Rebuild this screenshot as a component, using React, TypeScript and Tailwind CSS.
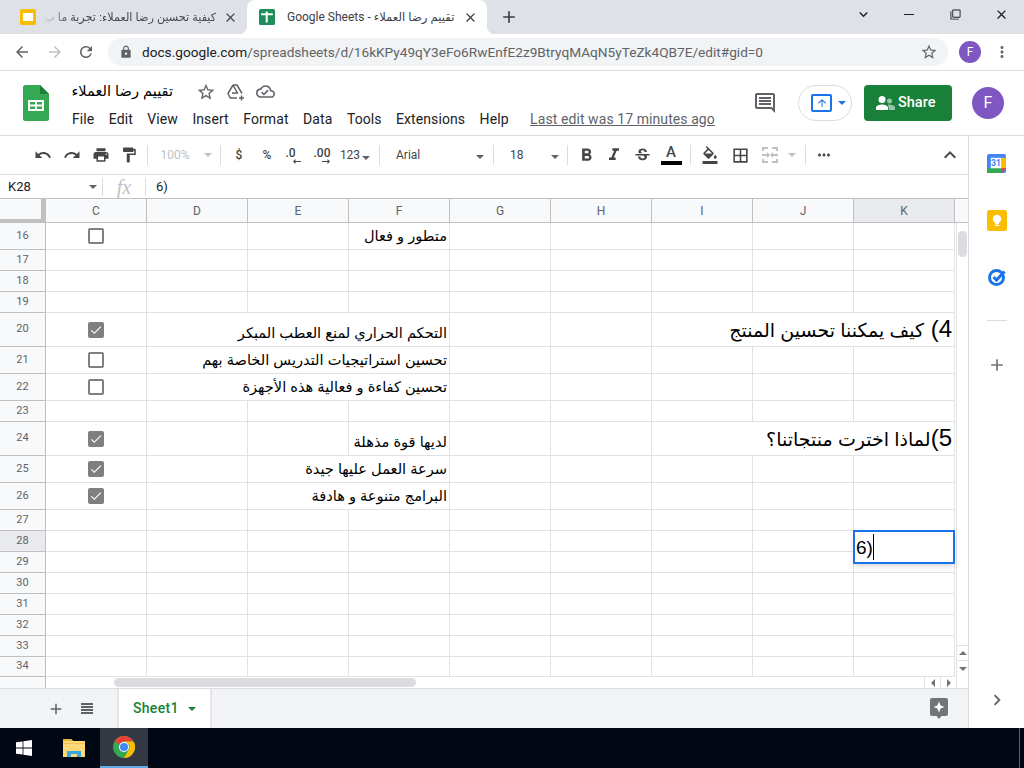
import React from "react";
import {
  MdArrowBack, MdArrowForward, MdRefresh, MdLock, MdStarBorder, MdOutlineCloudDone,
  MdOutlineInsertComment, MdUndo, MdRedo, MdPrint, MdFormatPaint, MdFormatBold, MdFormatItalic, MdStrikethroughS,
  MdFormatColorFill, MdBorderAll, MdMoreHoriz, MdExpandLess, MdAdd, MdClose, MdArrowUpward, MdChevronRight,
  MdKeyboardArrowDown, MdFilterNone, MdMoreVert, MdCheck,
} from "react-icons/md";

const Caret = ({ cls = "border-t-[#5f6368]" }: { cls?: string }) => (
  <span className={"inline-block w-0 h-0 border-x-[4px] border-x-transparent border-t-[4px] " + cls} />
);

const Tool = ({ children, w = "w-[28px]" }: { children: React.ReactNode; w?: string }) => (
  <div className={"flex items-center justify-center shrink-0 h-[24px] text-[#444746] " + w}>{children}</div>
);
const Sep = ({ m = "mx-[4px]" }: { m?: string }) => <div className={"w-px h-[20px] bg-[#dadce0] shrink-0 " + m} />;

type Row = { n: number; h: string; box?: "on" | "off"; text?: string; num?: string; q?: string; open?: string[]; head?: boolean };
const rows: Row[] = [
  { n: 16, h: "h-[27px]", box: "off", text: "متطور و فعال", open: [] },
  { n: 17, h: "h-[21px]" },
  { n: 18, h: "h-[21px]" },
  { n: 19, h: "h-[21px]" },
  { n: 20, h: "h-[34px]", box: "on", text: "التحكم الحراري لمنع العطب المبكر", open: ["D", "E", "I", "J"], num: "4) ", q: "كيف يمكننا تحسين المنتج" },
  { n: 21, h: "h-[27px]", box: "off", text: "تحسين استراتيجيات التدريس الخاصة بهم", open: ["D", "E"] },
  { n: 22, h: "h-[27px]", box: "off", text: "تحسين كفاءة و فعالية هذه الأجهزة", open: ["D", "E"] },
  { n: 23, h: "h-[21px]" },
  { n: 24, h: "h-[34px]", box: "on", text: "لديها قوة مذهلة", open: ["I", "J"], num: "5)", q: "لماذا اخترت منتجاتنا؟" },
  { n: 25, h: "h-[27px]", box: "on", text: "سرعة العمل عليها جيدة", open: ["E"] },
  { n: 26, h: "h-[27px]", box: "on", text: "البرامج متنوعة و هادفة", open: ["E"] },
  { n: 27, h: "h-[21px]" },
  { n: 28, h: "h-[21px]", head: true },
  { n: 29, h: "h-[21px]" },
  { n: 30, h: "h-[21px]" },
  { n: 31, h: "h-[21px]" },
  { n: 32, h: "h-[21px]" },
  { n: 33, h: "h-[21px]" },
  { n: 34, h: "h-[20px]" },
];
const cols = ["C", "D", "E", "F", "G", "H", "I", "J", "K"];
const arabic = { fontFamily: '"Liberation Sans", "DejaVu Sans", sans-serif' };

function Checkbox({ on }: { on: boolean }) {
  return on ? (
    <div className="w-[16px] h-[16px] rounded-[2px] bg-[#7f7f7f] flex items-center justify-center">
      <MdCheck size={14} className="text-white" />
    </div>
  ) : (
    <div className="w-[16px] h-[16px] rounded-[2px] border-2 border-[#7f7f7f] bg-white" />
  );
}

function SheetRow({ r }: { r: Row }) {
  return (
    <div className={"flex shrink-0 " + r.h}>
      <div className={"w-[46px] shrink-0 border-r border-b border-r-[#c0c0c0] border-b-[#c0c0c0] flex items-center justify-center text-[11px] text-[#5f6368] " + (r.head ? "bg-[#e8eaed]" : "bg-[#f8f9fa]")}>
        {r.n}
      </div>
      {cols.map((c) => {
        const open = r.open?.includes(c);
        return (
          <div key={c} className={"relative w-[101px] shrink-0 border-b border-b-[#e2e2e2] " + (open ? "" : "border-r border-r-[#e2e2e2]")}>
            {c === "C" && r.box && (
              <div className="h-full flex items-center justify-center">
                <Checkbox on={r.box === "on"} />
              </div>
            )}
            {c === "F" && r.text && (
              <div className="h-full flex items-end justify-end pr-[2px] pb-[2px]">
                <span dir="rtl" style={arabic} className="shrink-0 whitespace-nowrap text-[14.6px] leading-[22px] text-black">{r.text}</span>
              </div>
            )}
            {c === "K" && r.q && (
              <div className="h-full flex items-center justify-end pr-[2px]">
                <span dir="rtl" style={arabic} className="shrink-0 whitespace-nowrap text-[24px] leading-[33px] text-black">
                  {r.num}<span className="text-[19px]">{r.q}</span>
                </span>
              </div>
            )}
            {c === "K" && r.head && (
              <div className="absolute z-10 left-[-1px] top-[-1px] w-[102px] h-[34px] bg-white border-2 border-[#1a73e8] shadow-md flex items-center pl-[1px]">
                <span className="font-['Liberation_Sans'] text-[19px] leading-none text-black">6)</span>
                <span className="w-px h-[26px] bg-black" />
              </div>
            )}
          </div>
        );
      })}
    </div>
  );
}

const Calendar = () => (
  <svg width="19" height="19" viewBox="0 0 20 20">
    <rect x="0" y="0" width="20" height="20" rx="2" fill="#4285f4" />
    <rect x="0" y="15" width="15" height="5" fill="#34a853" />
    <rect x="15" y="4" width="5" height="11" fill="#fbbc04" />
    <path d="M15 15h5l-5 5z" fill="#ea4335" />
    <rect x="4" y="4" width="11" height="11" fill="#fff" />
    <text x="9.5" y="13" fontSize="9" fontWeight="700" fill="#4285f4" textAnchor="middle" fontFamily="Roboto">31</text>
  </svg>
);
const Keep = () => (
  <svg width="20" height="21" viewBox="0 0 20 21">
    <rect width="20" height="21" rx="2.5" fill="#fbbc04" />
    <circle cx="10" cy="9" r="4.2" fill="#fff" />
    <rect x="8" y="12" width="4" height="2" fill="#fff" />
    <rect x="8" y="14.6" width="4" height="1.4" fill="#fff" />
  </svg>
);
const Tasks = () => (
  <svg width="20" height="20" viewBox="0 0 20 20" fill="none">
    <circle cx="9.5" cy="10.5" r="7" stroke="#1a73e8" strokeWidth="3" />
    <path d="M6.5 10l3 3 8-8.5" stroke="#1a73e8" strokeWidth="3" />
  </svg>
);
const SheetsLogo = () => (
  <svg width="26" height="36" viewBox="0 0 26 36">
    <path d="M2.5 0H17l9 9v24.5a2.5 2.5 0 0 1-2.5 2.5h-21A2.5 2.5 0 0 1 0 33.5v-31A2.5 2.5 0 0 1 2.5 0z" fill="#34a853" />
    <path d="M17 0l9 9h-9z" fill="#188038" />
    <path d="M5 15h16v11H5zm2 2v2.5h5V17zm7 0v2.5h5V17zm-7 4.5V24h5v-2.5zm7 0V24h5v-2.5z" fill="#fff" fillRule="evenodd" />
  </svg>
);
const Favicon = () => (
  <svg width="16" height="16" viewBox="0 0 16 16">
    <rect width="16" height="16" rx="1.5" fill="#1e8e5a" />
    <path d="M6.7 2.5h2v11h-2zM2.2 4.2h11.6v2H2.2z" fill="#fff" />
  </svg>
);
const DriveAdd = () => (
  <svg width="20" height="20" viewBox="0 0 20 20" fill="none" stroke="#5f6368" strokeWidth="1.5" strokeLinejoin="round">
    <path d="M7 3h4l5 8.5M7 3L2 11.5 4.2 16H11" />
    <path d="M7 3l4.5 8H6" />
    <path d="M15.5 13.5v5M13 16h5" />
  </svg>
);
const ShareIcon = () => (
  <svg width="19" height="14" viewBox="0 0 19 14">
    <circle cx="13.5" cy="5" r="2.5" fill="#fff" fillOpacity=".55" />
    <path d="M12 8.5c3 0 7 .9 7 2.8V14h-6z" fill="#fff" fillOpacity=".55" />
    <circle cx="6" cy="3.5" r="3.5" fill="#fff" />
    <path d="M0 14v-2.2C0 9.3 4 8.5 6 8.5s6 .8 6 3.3V14z" fill="#fff" />
  </svg>
);
const ArrowL = () => (
  <svg width="8" height="5" viewBox="0 0 8 5" fill="#444746"><path d="M0 2.5L2.5 0v2H8v1H2.5v2z" /></svg>
);
const ArrowR = () => (
  <svg width="8" height="5" viewBox="0 0 8 5" fill="#444746"><path d="M8 2.5L5.5 0v2H0v1h5.5v2z" /></svg>
);
const Chrome = () => (
  <svg width="22" height="22" viewBox="0 0 22 22">
    <circle cx="11" cy="11" r="11" fill="#34a853" />
    <path d="M11 0a11 11 0 0 1 9.53 5.5H11A5.5 5.5 0 0 0 6.24 8.25L1.47 5.5A11 11 0 0 1 11 0z" fill="#ea4335" />
    <path d="M20.53 5.5A11 11 0 0 1 11 22l4.76-8.25A5.5 5.5 0 0 0 15.76 8.25L11 5.5z" fill="#fbbc04" />
    <circle cx="11" cy="11" r="5" fill="#fff" />
    <circle cx="11" cy="11" r="4" fill="#4285f4" />
  </svg>
);
const Folder = () => (
  <svg width="22" height="20" viewBox="0 0 22 20">
    <path d="M0 1h8l2 2h12v16H0z" fill="#ffd978" />
    <path d="M0 1h8l2 2H0z" fill="#e6b73f" />
    <rect x="0" y="5" width="22" height="1" fill="#f4c24f" />
    <path d="M4 19v-6h14v6h-4v-3h-6v3z" fill="#3aa7e0" />
  </svg>
);
const Windows = () => (
  <svg width="16" height="16" viewBox="0 0 16 16" fill="#fff">
    <path d="M0 2.3l6.6-.9v6.2H0zM7.4 1.3L16 0v7.6H7.4zM0 8.4h6.6v6.2L0 13.7zM7.4 8.4H16V16l-8.6-1.2z" />
  </svg>
);
const Explore = () => (
  <svg width="18" height="21" viewBox="0 0 18 21">
    <path d="M2 0h14a2 2 0 0 1 2 2v14a2 2 0 0 1-2 2h-4.5L9 21l-2.5-3H2a2 2 0 0 1-2-2V2a2 2 0 0 1 2-2z" fill="#70757a" />
    <path d="M9 3.5l1.6 3.9L14.5 9l-3.9 1.6L9 14.5l-1.6-3.9L3.5 9l3.9-1.6z" fill="#fff" />
  </svg>
);
const Merge = () => (
  <svg width="18" height="18" viewBox="0 0 18 18" fill="#bdc1c6">
    <path d="M1 1h6v2H3v2H1zM11 1h6v4h-2V3h-4zM1 13h2v2h4v2H1zM15 13h2v4h-6v-2h4zM1 8h5V6l3 3-3 3v-2H1zM17 8h-5V6L9 9l3 3v-2h5z" />
  </svg>
);

export default function App() {
  return (
    <div className="w-[1024px] h-[768px] overflow-hidden flex flex-col bg-white font-['Roboto',sans-serif] text-[#202124]">
      {/* Tab strip */}
      <div className="h-[34px] shrink-0 bg-[#dee1e6] flex items-stretch">
        <div className="w-[247px] shrink-0 flex items-center pl-[20px] pr-[9px]">
          <div className="w-[16px] h-[16px] rounded-[2px] bg-[#fbbc04] flex items-center justify-center shrink-0">
            <div className="w-[10px] h-[8px] bg-white" />
          </div>
          <div className="flex-1 min-w-0 flex justify-end ml-[6px] mr-[7px] [mask-image:linear-gradient(to_right,transparent,black_28px)]">
            <span dir="rtl" style={arabic} className="shrink-0 whitespace-nowrap text-[11.2px] text-[#45494f]">كيفية تحسين رضا العملاء: تجربة ما ب</span>
          </div>
          <MdClose size={15} className="text-[#45494f] shrink-0" />
        </div>
        <div className="relative w-[240px] shrink-0 bg-white rounded-t-[8px] flex items-center pl-[12px] pr-[9px]">
          <div className="absolute left-[-8px] bottom-0 w-[8px] h-[8px] bg-[radial-gradient(circle_at_0_0,#dee1e6_8px,#fff_8px)]" />
          <div className="absolute right-[-8px] bottom-0 w-[8px] h-[8px] bg-[radial-gradient(circle_at_100%_0,#dee1e6_8px,#fff_8px)]" />
          <Favicon />
          <span className="flex-1 ml-[12px] whitespace-nowrap text-[12px] text-[#3c4043] font-['Roboto']">
            Google Sheets - <span dir="rtl" style={arabic} className="text-[11.6px]">تقييم رضا العملاء</span>
          </span>
          <MdClose size={15} className="text-[#3c4043] shrink-0" />
        </div>
        <div className="ml-[12px] flex items-center">
          <MdAdd size={20} className="text-[#3c4043]" />
        </div>
        <div className="flex-1" />
        <div className="flex items-start text-[#202124]">
          <div className="w-[46px] h-[28px] flex items-center justify-center"><MdKeyboardArrowDown size={17} /></div>
          <div className="w-[46px] h-[28px] flex items-center justify-center"><div className="w-[10px] h-px bg-[#202124]" /></div>
          <div className="w-[46px] h-[28px] flex items-center justify-center"><MdFilterNone size={11} /></div>
          <div className="w-[46px] h-[28px] flex items-center justify-center"><MdClose size={15} /></div>
        </div>
      </div>
      {/* Address bar */}
      <div className="h-[37px] shrink-0 border-b border-[#dadce0] flex items-center">
        <div className="w-[108px] shrink-0 flex items-center text-[#5f6368]">
          <MdArrowBack size={18} className="ml-[13px]" />
          <MdArrowForward size={18} className="ml-[15px] text-[#bdc1c6]" />
          <MdRefresh size={18} className="ml-[13px]" />
        </div>
        <div className="w-[840px] h-[28px] shrink-0 rounded-full bg-[#f1f3f4] flex items-center pl-[11px] pr-[10px]">
          <MdLock size={14} className="text-[#5f6368]" />
          <span className="ml-[9px] text-[13.65px] text-[#5f6368] whitespace-nowrap flex-1">
            <span className="text-[#202124]">docs.google.com</span>/spreadsheets/d/16kKPy49qY3eFo6RwEnfE2z9BtryqMAqN5yTeZk4QB7E/edit#gid=0
          </span>
          <MdStarBorder size={18} className="text-[#5f6368]" />
        </div>
        <div className="ml-[11px] w-[22px] h-[22px] rounded-full bg-[#7e57c2] text-white text-[12px] flex items-center justify-center">F</div>
        <MdMoreVert size={18} className="ml-[12px] text-[#5f6368]" />
      </div>
      {/* Docs header */}
      <div className="h-[65px] shrink-0 border-b border-[#dadce0] flex">
        <div className="w-[72px] shrink-0 pl-[23px] pt-[14px]"><SheetsLogo /></div>
        <div className="flex-1 min-w-0 flex flex-col">
          <div className="h-[35px] flex items-center pt-[6px]">
            <span dir="rtl" style={arabic} className="w-[101px] whitespace-nowrap text-[14.6px] font-medium text-black">تقييم رضا العملاء</span>
            <MdStarBorder size={20} className="ml-[23px] text-[#5f6368]" />
            <span className="ml-[10px]"><DriveAdd /></span>
            <MdOutlineCloudDone size={19} className="ml-[10px] text-[#5f6368]" />
          </div>
          <div className="mt-[3px] flex items-center text-[14px] gap-[14.5px] tracking-[0.08px] leading-[20px] text-[#202124]">
            <span>File</span><span>Edit</span><span>View</span><span>Insert</span><span>Format</span><span>Data</span><span>Tools</span><span>Extensions</span><span>Help</span>
            <span className="ml-[7px] text-[#5f6368] underline">Last edit was 17 minutes ago</span>
          </div>
        </div>
        <div className="flex items-start pt-[14px] pr-[20px]">
          <MdOutlineInsertComment size={24} className="mt-[6px] text-[#5f6368]" />
          <div className="ml-[21px] w-[54px] h-[36px] rounded-full border border-[#dadce0] flex items-center pl-[12px] gap-[6px]">
            <div className="w-[21px] h-[18px] border-2 border-[#1a73e8] rounded-[2px] flex items-center justify-center"><MdArrowUpward size={12} className="text-[#1a73e8]" /></div>
            <Caret cls="border-t-[#1a73e8]" />
          </div>
          <div className="ml-[12px] w-[88px] h-[36px] rounded-[4px] bg-[#188038] text-white text-[14.5px] font-medium flex items-center pl-[12px] gap-[3px]">
            <ShareIcon /> Share
          </div>
          <div className="ml-[20px] mt-[2px] w-[32px] h-[32px] rounded-full bg-[#7e57c2] text-white text-[16px] flex items-center justify-center">F</div>
        </div>
      </div>
      {/* Body */}
      <div className="flex-1 min-h-0 flex">
        <div className="w-[968px] shrink-0 flex flex-col">
          {/* Toolbar */}
          <div className="h-[39px] shrink-0 border-b border-[#dadce0] flex items-center pl-[29px]">
            <Tool><MdUndo size={18} /></Tool>
            <Tool w="w-[30px]"><MdRedo size={18} /></Tool>
            <Tool><MdPrint size={18} /></Tool>
            <Tool><MdFormatPaint size={18} /></Tool>
            <Sep />
            <Tool w="w-[68px]"><span className="text-[12px] text-[#bdc1c6] mr-[14px]">100%</span><Caret cls="border-t-[#bdc1c6]" /></Tool>
            <Sep m="mx-0" />
            <Tool w="w-[36px]"><span className="text-[12px] font-medium">$</span></Tool>
            <Tool w="w-[20px]"><span className="text-[12px] font-medium">%</span></Tool>
            <Tool w="w-[32px]">
              <div className="flex flex-col items-start">
                <span className="text-[12px] font-medium leading-[12px]">.0</span>
                <span className="ml-[7px]"><ArrowL /></span>
              </div>
            </Tool>
            <Tool w="w-[26px]">
              <div className="flex flex-col items-end">
                <span className="text-[12px] font-medium leading-[12px]">.00</span>
                <ArrowR />
              </div>
            </Tool>
            <Tool w="w-[44px]"><span className="text-[12px] mr-[2px]">123</span><span className="mr-[4px]"><Caret /></span></Tool>
            <Sep m="mx-0" />
            <div className="w-[113px] shrink-0 flex items-center pl-[16px] text-[12px] text-[#444746]"><span className="flex-1">Arial</span><span className="mr-[9px]"><Caret /></span></div>
            <Sep m="mx-0" />
            <div className="w-[73px] shrink-0 flex items-center pl-[16px] text-[12px] text-[#444746]"><span className="flex-1">18</span><span className="mr-[8px]"><Caret /></span></div>
            <Sep m="mx-0" />
            <Tool w="w-[36px]"><MdFormatBold size={21} /></Tool>
            <Tool w="w-[20px]"><MdFormatItalic size={20} /></Tool>
            <Tool w="w-[36px]"><MdStrikethroughS size={19} /></Tool>
            <Tool w="w-[22px]">
              <div className="flex flex-col items-center">
                <span className="text-[15px] leading-[15px] font-medium">A</span>
                <span className="w-[21px] h-[4px] bg-black mt-[1px]" />
              </div>
            </Tool>
            <div className="w-[8px] shrink-0" />
            <Sep m="mx-0" />
            <Tool w="w-[38px]"><MdFormatColorFill size={18} /></Tool>
            <Tool w="w-[22px]"><MdBorderAll size={19} /></Tool>
            <Tool w="w-[37px]"><Merge /></Tool>
            <Caret cls="border-t-[#bdc1c6]" />
            <div className="w-[9px] shrink-0" />
            <Sep m="mx-0" />
            <Tool w="w-[36px]"><MdMoreHoriz size={18} /></Tool>
            <div className="flex-1" />
            <MdExpandLess size={24} className="mr-[6px] text-[#444746]" />
          </div>
          {/* Formula bar */}
          <div className="h-[24px] shrink-0 border-b border-[#c0c0c0] flex items-center text-[13px]">
            <div className="w-[102px] shrink-0 flex items-center pl-[8px] pr-[5px]"><span className="flex-1 text-[#202124]">K28</span><Caret /></div>
            <div className="w-px h-[18px] bg-[#dadce0]" />
            <div className="w-[42px] shrink-0 text-center font-['Liberation_Serif'] italic text-[20px] leading-none text-[#bdc1c6]">fx</div>
            <div className="w-px h-[18px] bg-[#dadce0]" />
            <span className="ml-[10px] text-[#202124]">6)</span>
          </div>
          {/* Grid */}
          <div className="flex-1 min-h-0 flex flex-col">
            <div className="flex-1 min-h-0 flex">
              <div className="w-[955px] shrink-0 flex flex-col">
                <div className="flex h-[24px] shrink-0">
                  <div className="relative w-[46px] shrink-0 bg-[#f8f9fa] border-r border-r-[#c0c0c0]">
                    <div className="absolute right-0 top-0 bottom-0 w-[4px] bg-[#c0c0c0]" />
                    <div className="absolute left-0 right-0 bottom-0 h-[4px] bg-[#c0c0c0]" />
                  </div>
                  {cols.map((c) => (
                    <div key={c} className={"w-[101px] shrink-0 border-r border-b border-[#c0c0c0] flex items-center justify-center text-[12px] text-[#5f6368] " + (c === "K" ? "bg-[#e8eaed]" : "bg-[#f8f9fa]")}>{c}</div>
                  ))}
                </div>
                {rows.map((r) => <SheetRow key={r.n} r={r} />)}
              </div>
              <div className="flex-1 flex flex-col">
                <div className="h-[24px] shrink-0 bg-[#f8f9fa] border-b border-[#c0c0c0]" />
                <div className="flex-1 ml-[1px] border-l border-[#e2e2e2] pl-[1px] pt-[8px]">
                  <div className="w-[9px] h-[26px] rounded-full bg-[#dadce0]" />
                </div>
                <div className="h-[16px] shrink-0 ml-[1px] border border-r-0 border-[#e2e2e2] flex items-center justify-center"><span className="w-0 h-0 border-x-[4px] border-x-transparent border-b-[4px] border-b-[#70757a]" /></div>
                <div className="h-[16px] shrink-0 ml-[1px] border-l border-[#e2e2e2] flex items-center justify-center"><Caret cls="border-t-[#70757a]" /></div>
              </div>
            </div>
            {/* Horizontal scrollbar */}
            <div className="h-[11px] shrink-0 flex">
              <div className="w-[46px] shrink-0 bg-[#f8f9fa] border-r border-[#c0c0c0]" />
              <div className="ml-[68px] mt-[1px] w-[302px] h-[9px] rounded-full bg-[#dadce0]" />
              <div className="flex-1" />
              <div className="w-[16px] border-l border-[#e2e2e2] flex items-center justify-center"><span className="w-0 h-0 border-y-[4px] border-y-transparent border-r-[4px] border-r-[#70757a]" /></div>
              <div className="w-[16px] border-l border-[#e2e2e2] flex items-center justify-center"><span className="w-0 h-0 border-y-[4px] border-y-transparent border-l-[4px] border-l-[#70757a]" /></div>
              <div className="w-[12px] border-l border-[#e2e2e2]" />
            </div>
          </div>
          {/* Sheet tabs */}
          <div className="h-[40px] shrink-0 bg-[#f1f3f4] border-t border-[#dadce0] flex items-stretch">
            <div className="w-[117px] shrink-0 flex items-center pl-[47px] text-[#5f6368]">
              <MdAdd size={18} />
              <div className="ml-[16px] w-[12px] h-[11px] flex flex-col justify-between">
                <span className="h-[2px] bg-[#5f6368]" /><span className="h-[2px] bg-[#5f6368]" /><span className="h-[2px] bg-[#5f6368]" /><span className="h-[2px] bg-[#5f6368]" />
              </div>
            </div>
            <div className="w-[95px] shrink-0 bg-white border-x-2 border-[#e4e6e9] flex items-center pl-[14px] text-[14px] tracking-[0.3px] font-medium text-[#188038] gap-[9px]">
              Sheet1 <Caret cls="border-t-[#188038]" />
            </div>
            <div className="flex-1 flex items-center justify-end pr-[20px]"><Explore /></div>
          </div>
        </div>
        {/* Side panel */}
        <div className="flex-1 border-l border-[#dadce0] flex flex-col items-center">
          <div className="mt-[18px] h-[20px]"><Calendar /></div>
          <div className="mt-[36px]"><Keep /></div>
          <div className="mt-[36px]"><Tasks /></div>
          <div className="mt-[33px] w-[20px] h-px bg-[#dadce0]" />
          <MdAdd size={20} className="mt-[34px] text-[#70757a]" />
          <div className="flex-1" />
          <MdChevronRight size={22} className="mb-[17px] text-[#5f6368]" />
        </div>
      </div>
      {/* Taskbar */}
      <div className="h-[40px] shrink-0 bg-[#010814] flex items-stretch">
        <div className="w-[48px] flex items-center justify-center"><Windows /></div>
        <div className="w-[52px] flex items-center justify-center"><Folder /></div>
        <div className="w-[48px] bg-[#333842] border-b-2 border-[#62a9e8] flex items-center justify-center"><Chrome /></div>
        <div className="flex-1" />
        <div className="w-px bg-[#5f6368] mr-[4px]" />
      </div>
    </div>
  );
}
